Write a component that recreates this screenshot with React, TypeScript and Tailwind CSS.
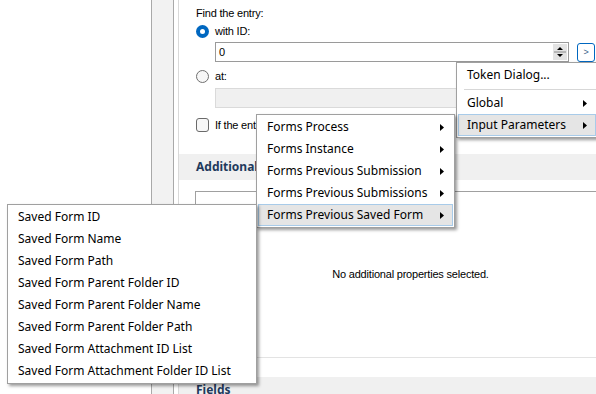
import React from "react";

const MENU = "font-['Noto_Sans',sans-serif] text-[12px] text-black";
const DLG = "font-['Liberation_Sans',Arial,sans-serif] text-[11px] tracking-[-0.2px] text-black";

function Arrow() {
  return (
    <svg width="4" height="7" viewBox="0 0 4 7">
      <path d="M0 0L4 3.5L0 7Z" fill="#000" />
    </svg>
  );
}

function Item({ label, arrow, active }: { label: string; arrow?: boolean; active?: boolean }) {
  return (
    <div
      className={
        "h-[22px] flex items-center justify-between pl-[8px] pr-[8px] border whitespace-nowrap " +
        (active ? "bg-[#e5e5e5] border-[#a8cbe9]" : "border-transparent")
      }
    >
      <span>{label}</span>
      {arrow ? <Arrow /> : null}
    </div>
  );
}

function Header({ title }: { title: string }) {
  return (
    <div className="h-[26px] bg-[#f0f0f0] flex items-center pl-[17px] font-['Noto_Sans',sans-serif] text-[12px] font-bold text-[#1f3a5c] whitespace-nowrap">
      {title}
    </div>
  );
}

export default function App() {
  const saved = [
    "Saved Form ID",
    "Saved Form Name",
    "Saved Form Path",
    "Saved Form Parent Folder ID",
    "Saved Form Parent Folder Name",
    "Saved Form Parent Folder Path",
    "Saved Form Attachment ID List",
    "Saved Form Attachment Folder ID List",
  ];
  return (
    <div className="relative w-[596px] h-[394px] overflow-hidden bg-white flex">
      <div className="w-[151px] shrink-0 bg-white" />
      <div className="w-[23px] shrink-0 border-x border-[#a9a9a9] bg-[#f2f2f2]" />
      <div className="w-[4px] shrink-0 bg-white" />
      <div className="w-[418px] shrink-0 border-l border-[#d9d9d9] flex flex-col">
        <div className={DLG + " pl-[17px] pt-[7px] flex flex-col"}>
          <div className="h-[13px] leading-[13px]">Find the entry:</div>
          <div className="mt-[5px] flex items-center h-[13px]">
            <div className="w-[13px] h-[13px] rounded-full bg-[#0067c0] flex items-center justify-center">
              <div className="w-[5px] h-[5px] rounded-full bg-white" />
            </div>
            <span className="ml-[6px] leading-[13px]">with ID:</span>
          </div>
          <div className="mt-[4px] ml-[19px] flex items-center">
            <div className="w-[354px] h-[20px] border border-[#9a9a9a] bg-white flex items-center justify-between pl-[3px] pr-[1px]">
              <span>0</span>
              <svg width="14" height="16" viewBox="0 0 14 16">
                <rect x="0" y="0" width="14" height="16" fill="#e3e3e3" />
                <path d="M4 6L7 3L10 6Z" fill="#000" />
                <line x1="1" y1="8" x2="13" y2="8" stroke="#8a8a8a" strokeWidth="1" />
                <path d="M4 10L10 10L7 13Z" fill="#000" />
              </svg>
            </div>
            <div className="ml-[8px] w-[18px] h-[19px] rounded-[3px] border border-[#0067c0] bg-white flex items-center justify-center text-[9px] text-[#3a5f8a] leading-none">
              &gt;
            </div>
          </div>
          <div className="mt-[8px] flex items-center h-[13px]">
            <div className="w-[13px] h-[13px] rounded-full border border-[#707070] bg-[#f7f7f7]" />
            <span className="ml-[6px] leading-[13px]">at:</span>
          </div>
          <div className="mt-[5px] ml-[19px] w-[380px] h-[20px] border border-[#dadada] bg-[#f0f0f0]" />
          <div className="mt-[10px] flex items-center h-[14px]">
            <div className="w-[13px] h-[14px] rounded-[3px] border border-[#6a6a6a] bg-[#f7f7f7]" />
            <span className="ml-[6px] leading-[13px] whitespace-nowrap">If the entry does not exist, do not fail</span>
          </div>
        </div>
        <div className="mt-[22px]">
          <Header title="Additional Properties" />
        </div>
        <div className="mt-[11px] ml-[16px] w-[430px] h-[167px] shrink-0 border-t border-l border-[#a0a0a0] border-b border-b-[#e3e3e3] flex items-center justify-center">
          <span className={DLG}>No additional properties selected.</span>
        </div>
        <div className="mt-[19px]">
          <Header title="Fields" />
        </div>
      </div>

      {/* Token menu */}
      <div className={MENU + " absolute left-[456px] top-[62px] w-[142px] bg-white border border-[#a0a0a0] p-[1px] shadow-[2px_2px_3px_rgba(0,0,0,0.4)]"}>
        <Item label="Token Dialog..." />
        <div className="h-[6px] flex items-center pl-[6px]">
          <div className="h-px w-full bg-[#d7d7d7]" />
        </div>
        <Item label="Global" arrow />
        <Item label="Input Parameters" arrow active />
      </div>

      {/* Forms submenu */}
      <div className={MENU + " absolute left-[256px] top-[114px] w-[199px] bg-white border border-[#a0a0a0] p-[1px] shadow-[2px_2px_3px_rgba(0,0,0,0.4)]"}>
        <Item label="Forms Process" arrow />
        <Item label="Forms Instance" arrow />
        <Item label="Forms Previous Submission" arrow />
        <Item label="Forms Previous Submissions" arrow />
        <Item label="Forms Previous Saved Form" arrow active />
      </div>

      {/* Saved form submenu */}
      <div className={MENU + " absolute left-[7px] top-[204px] w-[250px] bg-white border border-[#a0a0a0] p-[1px] shadow-[2px_2px_3px_rgba(0,0,0,0.4)]"}>
        {saved.map((s) => (
          <Item key={s} label={s} />
        ))}
      </div>
    </div>
  );
}
